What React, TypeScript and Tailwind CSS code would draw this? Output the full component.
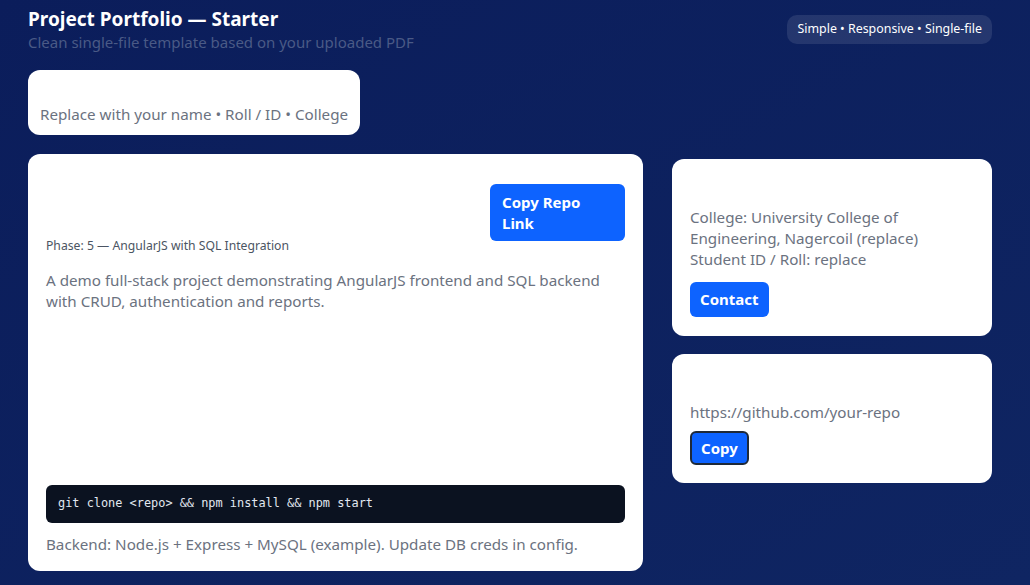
import React from "react";

export default function App() {
  const font = { fontFamily: '"Noto Sans", "Open Sans", sans-serif' };

  return (
    <div
      className="min-h-[585px] w-full bg-gradient-to-br from-[#0b1d5b] to-[#0f2562] px-[28px] pt-[6px] pb-[14px]"
      style={font}
    >
      {/* Header */}
      <header className="flex items-start justify-between w-[964px]">
        <div>
          <h1 className="text-[19px] leading-[26px] font-bold text-white">Project Portfolio — Starter</h1>
          <p className="text-[15px] leading-[20px] text-[#4a5a86]">
            Clean single-file template based on your uploaded PDF
          </p>
        </div>
        <div className="mt-[9px] rounded-[10px] bg-white/10 px-[10px] h-[29px] flex items-center text-[12.4px] text-white">
          Simple • Responsive • Single-file
        </div>
      </header>

      {/* Name card */}
      <div className="mt-[18px] inline-block rounded-xl bg-white px-3 pt-[34px] pb-[10px]">
        <p className="text-[15.2px] leading-[21px] text-[#6b7280]">Replace with your name • Roll / ID • College</p>
      </div>

      {/* Main grid */}
      <div className="mt-[19px] flex items-start gap-[29px]">
        {/* Project card */}
        <div className="w-[615px] h-[417px] rounded-xl bg-white px-[18px] pt-[18px] pb-[16px] flex flex-col">
          <div className="flex items-start justify-between">
            <div className="pt-[66px]">
              <p className="text-[12.2px] leading-[16px] text-[#4b5563]">Phase: 5 — AngularJS with SQL Integration</p>
            </div>
            <button className="mt-[12px] w-[135px] rounded-md bg-[#0d63ff] px-3 pt-[8px] pb-[7px] text-left text-[15px] leading-[21px] font-bold text-white">
              Copy Repo
              <br />
              Link
            </button>
          </div>
          <p className="mt-[16px] text-[15.2px] leading-[20.5px] text-[#6b7280]">
            A demo full-stack project demonstrating AngularJS frontend and SQL backend with CRUD, authentication and
            reports.
          </p>
          <div className="mt-auto rounded-md bg-[#0b1220] px-3 h-[38px] flex items-center">
            <code
              className="text-[11.9px] text-[#e2e8f0]"
              style={{ fontFamily: '"DejaVu Sans Mono", "Liberation Mono", monospace' }}
            >
              git clone &lt;repo&gt; &amp;&amp; npm install &amp;&amp; npm start
            </code>
          </div>
          <p className="mt-[11px] text-[15.2px] leading-[21px] text-[#6b7280]">
            Backend: Node.js + Express + MySQL (example). Update DB creds in config.
          </p>
        </div>

        {/* Side column */}
        <div className="mt-[5px] w-[320px] flex flex-col gap-[18px]">
          <div className="rounded-xl bg-white px-[18px] pt-[48px] pb-[19px]">
            <p className="text-[15.2px] leading-[21px] text-[#6b7280]">
              College: University College of Engineering, Nagercoil (replace)
            </p>
            <p className="text-[15.2px] leading-[21px] text-[#6b7280]">Student ID / Roll: replace</p>
            <button className="mt-[12px] h-[35px] rounded-md bg-[#0d63ff] px-[10px] text-[15px] font-bold text-white">
              Contact
            </button>
          </div>

          <div className="rounded-xl bg-white px-[18px] pt-[48px] pb-[18px]">
            <p className="text-[15.2px] leading-[21px] text-[#6b7280]">https://github.com/your-repo</p>
            <button className="mt-[8px] h-[34px] rounded-md border-2 border-[#1f2937] bg-[#0d63ff] px-[9px] text-[15px] font-bold text-white">
              Copy
            </button>
          </div>
        </div>
      </div>
    </div>
  );
}
